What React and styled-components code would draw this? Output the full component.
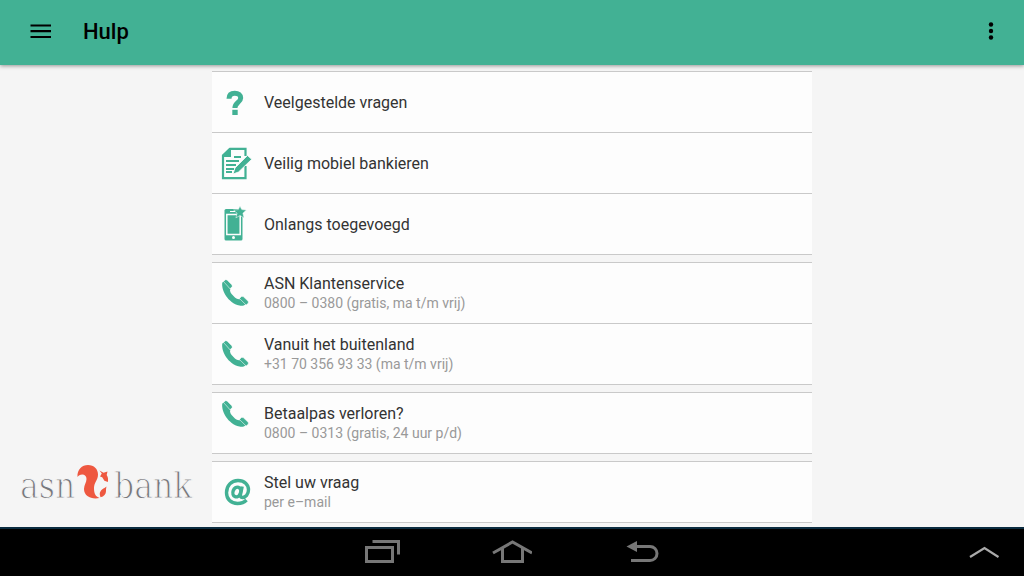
import React from 'react';
import styled, { createGlobalStyle, css } from 'styled-components';

const colors = {
  green: '#42b194',
  page: '#f5f5f5',
  row: '#fdfdfd',
  line: '#c9c9c9',
  text: '#333333',
  muted: '#999999',
  logo: '#77777c',
  orange: '#ee5840',
};

const GlobalStyle = createGlobalStyle`
  * {
    box-sizing: border-box;
  }
  body {
    margin: 0;
    background: ${colors.page};
    font-family: Roboto, sans-serif;
    color: ${colors.text};
  }
`;

const Page = styled.div`
  display: flex;
  flex-direction: column;
  min-height: 100vh;
`;

const AppBar = styled.header`
  display: flex;
  align-items: center;
  height: 65px;
  padding: 0 17px 4px;
  background: ${colors.green};
  box-shadow: 0 1px 4px rgba(0, 0, 0, 0.4);
  z-index: 1;
`;

const iconButton = css`
  display: flex;
  align-items: center;
  justify-content: center;
  padding: 0;
  border: none;
  background: none;
  color: inherit;
  cursor: pointer;
`;

const BarButton = styled.button`
  ${iconButton};
  width: ${props => props.$width};
  height: 48px;
  color: #000;
`;

const Title = styled.h1`
  flex: 1;
  margin: 0;
  padding: 2px 0 0 18px;
  font-size: 22px;
  line-height: 26px;
  font-weight: 500;
  color: #000;
`;

const Main = styled.main`
  flex: 1;
  display: grid;
  grid-template-columns: minmax(0, 1fr) minmax(0, 600px) minmax(0, 1fr);
`;

const Brand = styled.div`
  display: flex;
  align-self: end;
  justify-self: end;
  padding: 0 18px 15px 0;
`;

const Groups = styled.div`
  display: flex;
  flex-direction: column;
  gap: 7px;
  padding: 6px 0 4px;
`;

const Group = styled.ul`
  margin: 0;
  padding: 0;
  list-style: none;
  border-top: 1px solid ${colors.line};
`;

const Row = styled.a`
  display: flex;
  align-items: center;
  height: 61px;
  border-bottom: 1px solid ${colors.line};
  background: ${colors.row};
  color: inherit;
  text-decoration: none;
`;

const IconBox = styled.span`
  display: flex;
  justify-content: center;
  align-self: ${props => (props.$raised ? 'flex-start' : 'center')};
  padding-top: ${props => (props.$raised ? '4px' : '0')};
  width: 46px;
  margin-right: 6px;
  color: ${colors.green};
`;

const RowText = styled.span`
  display: flex;
  flex-direction: column;
  padding-top: 2px;
`;

const RowTitle = styled.span`
  font-size: 16px;
  line-height: 18px;
`;

const RowDetail = styled.span`
  font-size: 14px;
  line-height: 20px;
  color: ${colors.muted};
`;

const NavBar = styled.nav`
  display: grid;
  grid-template-columns: 1fr auto 1fr;
  align-items: center;
  height: 49px;
  padding-bottom: 2px;
  border-top: 2px solid #0b2c40;
  background: #000;
  color: #777;
`;

const NavKeys = styled.div`
  grid-column: 2;
  display: flex;
  gap: 66px;
`;

const NavButton = styled.button`
  ${iconButton};
  width: 64px;
  height: 44px;
`;

const ExpandButton = styled(NavButton)`
  justify-self: end;
  margin-right: 8px;
  color: #aaa;
`;

function QuestionIcon() {
  return (
    <svg width="34" height="34" viewBox="0 0 34 34" aria-hidden="true">
      <path
        d="M11 13.800C11 9.800 13.500 8.200 16.800 8.200c3.600 0 5.900 1.800 5.900 4.800 0 4.500-5.800 4.500-5.800 10"
        fill="none"
        stroke="currentColor"
        strokeWidth="5"
      />
      <path d="M14.300 24.800h5.400v5.200h-5.400z" fill="currentColor" />
    </svg>
  );
}

function DocumentIcon() {
  return (
    <svg width="34" height="34" viewBox="0 0 34 34" aria-hidden="true">
      <path
        d="M27.500 10V2.800H12L5 9.500v22.700h22.500V20"
        fill="none"
        stroke="currentColor"
        strokeWidth="2.200"
      />
      <path d="M13 2v9H4V9.500L11.500 2z" fill="currentColor" />
      <path
        d="M16 11h7M8 15h13M8 19h10M8 23h8M8 26h6"
        stroke="currentColor"
        strokeWidth="1.800"
      />
      <path
        d="M29.500 9.500l4.200 3.800L20.500 26l-5.500 2 2-6z"
        fill="currentColor"
        stroke="#fdfdfd"
        strokeWidth="0.800"
      />
    </svg>
  );
}

function PhoneStarIcon() {
  return (
    <svg width="34" height="36" viewBox="0 0 34 36" aria-hidden="true">
      <rect x="6.500" y="3" width="18" height="31.500" rx="1.500" fill="currentColor" />
      <path d="M8.800 8.500h13.400v20H8.800z" fill="none" stroke="#fdfdfd" strokeWidth="1.500" />
      <path d="M12 5.500h5" stroke="#fdfdfd" />
      <circle cx="15.500" cy="31.500" r="1.500" fill="#fdfdfd" />
      <path
        d="M22 0l1.700 3.600 4.700.4-3.500 3.200 1.200 4.700-4.100-2.400-4.100 2.400 1.200-4.700L15.600 4l4.700-.4z"
        fill="currentColor"
        stroke="#fdfdfd"
        strokeWidth="0.500"
      />
    </svg>
  );
}

function CallIcon() {
  return (
    <svg width="34" height="34" viewBox="0 0 34 34" aria-hidden="true">
      <path
        d="M4.300 6.500C3 14 10 27 21.500 29.600c2.500.5 4.500.2 6-1.300L22.500 23c-2 .8-4.500-.2-7-3-3-3-4-5-3.200-7L6 5.500z"
        fill="currentColor"
      />
      <path
        d="M5.500 5.500l2-1.800 1.500.2 5 5 .2 1.700-2.200 2.200zM21.500 22.500l2-2 1.700.1 5 4.700.2 1.700-2.300 2z"
        fill="currentColor"
        stroke="#fdfdfd"
        strokeWidth="0.500"
      />
    </svg>
  );
}

function AtIcon() {
  return (
    <svg width="34" height="34" viewBox="0 0 34 34" aria-hidden="true">
      <g fill="none" stroke="currentColor">
        <path
          d="M28.500 25C26 27.800 22.500 28.500 19.500 28.500c-6.500 0-11-4.300-11-10.800C8.500 10.500 13.500 5.500 20 5.500c6.500 0 10.500 4 10.500 9.300 0 4.700-3 7.700-6 7.700-2 0-2.300-1.200-2-3l1.700-8"
          strokeWidth="3.400"
        />
        <ellipse
          cx="18.800"
          cy="17"
          rx="3.800"
          ry="5"
          strokeWidth="3.400"
          transform="rotate(20 18.800 17)"
        />
      </g>
    </svg>
  );
}

// the page-coloured stroke thins the letters down to a hairline
const LogoText = styled.text`
  font-family: 'DejaVu Serif Condensed', 'DejaVu Serif', serif;
  font-size: 35px;
  fill: ${colors.logo};
  stroke: ${colors.page};
  stroke-width: 1px;
`;

function Logo() {
  return (
    <svg width="174" height="52" viewBox="0 0 174 52" role="img" aria-label="asn bank">
      <LogoText x="0" y="38">asn</LogoText>
      <path
        d="M57.500 17C57 9.500 62 5 68 5c6 0 10 4 10 9.500 0 5.500-4 8-4 13.500 0 5.500 1.500 8.500 5.500 10-8 1.500-15.500-1.500-15.500-9 0-4 2.500-6.500 2.500-10 0-3-1.800-4.500-4.300-4.500-2.200 0-3.700 1-4.700 2.500z"
        fill={colors.orange}
      />
      <path
        d="M79.500 10.500l4 2.300 4-1.300-.8 3.500c1.200 1.800 1.700 4 1.200 7l-3.500-1.200-2.200-3.500-2.200-.8 1.800-3z"
        fill={colors.orange}
      />
      <path
        d="M86.500 26.500l-2 1.500c-3 1.500-5.500 4-4.500 7.500l.5 1.700c3.500-.7 5.500-3 5.500-6 0-2 .2-3.500.5-4.700z"
        fill={colors.orange}
      />
      <LogoText x="94" y="38">bank</LogoText>
    </svg>
  );
}

const groups = [
  [
    { title: 'Veelgestelde vragen', icon: QuestionIcon },
    { title: 'Veilig mobiel bankieren', icon: DocumentIcon },
    { title: 'Onlangs toegevoegd', icon: PhoneStarIcon },
  ],
  [
    {
      title: 'ASN Klantenservice',
      detail: '0800 – 0380 (gratis, ma t/m vrij)',
      icon: CallIcon,
    },
    {
      title: 'Vanuit het buitenland',
      detail: '+31 70 356 93 33 (ma t/m vrij)',
      icon: CallIcon,
    },
  ],
  [
    {
      title: 'Betaalpas verloren?',
      detail: '0800 – 0313 (gratis, 24 uur p/d)',
      icon: CallIcon,
      raised: true,
    },
  ],
  [{ title: 'Stel uw vraag', detail: 'per e–mail', icon: AtIcon }],
];

function HelpRow({ title, detail, icon: Icon, raised }) {
  return (
    <li>
      <Row href="#">
        <IconBox $raised={raised}>
          <Icon />
        </IconBox>
        <RowText>
          <RowTitle>{title}</RowTitle>
          {detail && <RowDetail>{detail}</RowDetail>}
        </RowText>
      </Row>
    </li>
  );
}

function App() {
  return (
    <>
      <GlobalStyle />
      <Page>
        <AppBar>
          <BarButton $width="48px" type="button" aria-label="Menu">
            <svg width="22" height="16" viewBox="0 0 22 16">
              <path
                d="M0.500 2.500h20.500M0.500 8.200h20.500M0.500 14h20.500"
                stroke="currentColor"
                strokeWidth="2.200"
              />
            </svg>
          </BarButton>
          <Title>Hulp</Title>
          <BarButton $width="32px" type="button" aria-label="Meer opties">
            <svg width="6" height="18" viewBox="0 0 6 18" fill="currentColor">
              <circle cx="3" cy="2.500" r="2.200" />
              <circle cx="3" cy="9" r="2.200" />
              <circle cx="3" cy="15.500" r="2.200" />
            </svg>
          </BarButton>
        </AppBar>
        <Main>
          <Brand>
            <Logo />
          </Brand>
          <Groups>
            {groups.map((rows, i) => (
              <Group key={i}>
                {rows.map(row => (
                  <HelpRow key={row.title} {...row} />
                ))}
              </Group>
            ))}
          </Groups>
        </Main>
        <NavBar>
          <NavKeys>
            <NavButton type="button" aria-label="Recente apps">
              <svg width="36" height="24" viewBox="0 0 36 24">
                <path
                  d="M2.500 7.500h26v14h-26zM8.500 1.500h26V14.500"
                  fill="none"
                  stroke="currentColor"
                  strokeWidth="3"
                />
              </svg>
            </NavButton>
            <NavButton type="button" aria-label="Start">
              <svg width="40" height="24" viewBox="0 0 40 24">
                <path
                  d="M1 13L20.500 2 40 13M10.500 8.500v13h20v-13"
                  fill="none"
                  stroke="currentColor"
                  strokeWidth="3"
                />
              </svg>
            </NavButton>
            <NavButton type="button" aria-label="Terug">
              <svg width="34" height="24" viewBox="0 0 34 24">
                <path
                  d="M9 6.500h16a7 7 0 0 1 0 14H6"
                  fill="none"
                  stroke="currentColor"
                  strokeWidth="3"
                />
                <path d="M1.500 6.500L12 1v11z" fill="currentColor" />
              </svg>
            </NavButton>
          </NavKeys>
          <ExpandButton type="button" aria-label="Uitklappen">
            <svg width="30" height="14" viewBox="0 0 30 14">
              <path
                d="M1 12L15.500 3l14 9"
                fill="none"
                stroke="currentColor"
                strokeWidth="2.200"
              />
            </svg>
          </ExpandButton>
        </NavBar>
      </Page>
    </>
  );
}

export default App;
